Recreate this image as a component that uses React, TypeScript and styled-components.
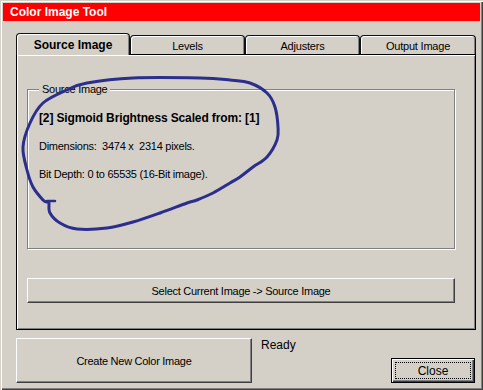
import React from "react";
import styled, { createGlobalStyle } from "styled-components";

const Global = createGlobalStyle`
  html, body { margin: 0; padding: 0; background: #d4d0c8; }
  body { font-family: "Liberation Sans", Arial, sans-serif; font-size: 11px; color: #000; }
`;

const Window = styled.div`
  position: relative;
  width: 483px;
  height: 390px;
  box-sizing: border-box;
  background: #d4d0c8;
  padding: 3px;
  display: flex;
  flex-direction: column;
  box-shadow: inset 1px 1px 0 #d4d0c8, inset 2px 2px 0 #ffffff, inset -1px -1px 0 #404040, inset -2px -2px 0 #808080;
`;

const TitleBar = styled.div`
  height: 18px;
  background: #ff0000;
  color: #fff;
  font-weight: bold;
  font-size: 12px;
  display: flex;
  align-items: center;
  padding-left: 7px;
`;

const Content = styled.div`
  flex: 1;
  display: flex;
  flex-direction: column;
  padding: 12px 4px 0 13px;
`;

const TabRow = styled.div`
  display: flex;
  align-items: flex-end;
  height: 22px;
  margin-bottom: -1px;
  position: relative;
  z-index: 2;
`;

const Tab = styled.div<{ $active?: boolean; $w: number }>`
  box-sizing: border-box;
  width: ${(p) => p.$w}px;
  height: ${(p) => (p.$active ? 22 : 19)}px;
  margin-bottom: ${(p) => (p.$active ? 0 : 1)}px;
  background: #d4d0c8;
  border: 1px solid #111;
  border-bottom: none;
  border-radius: 4px 4px 0 0;
  box-shadow: inset 1px 1px 0 #ffffff, inset -1px 0 0 #808080;
  display: flex;
  align-items: center;
  justify-content: center;
  font-size: ${(p) => (p.$active ? 12 : 11)}px;
  font-weight: ${(p) => (p.$active ? "bold" : "normal")};
  letter-spacing: ${(p) => (p.$active ? 0 : -0.2)}px;
  padding-top: ${(p) => (p.$active ? 0 : 1)}px;
`;

const Panel = styled.div`
  box-sizing: border-box;
  width: 460px;
  height: 276px;
  border: 1px solid #000;
  box-shadow: inset 1px 1px 0 #ffffff, inset -1px -1px 0 #808080;
  padding: 34px 20px 0 10px;
  display: flex;
  flex-direction: column;
`;

const Group = styled.fieldset`
  box-sizing: border-box;
  height: 160px;
  margin: 0;
  padding: 14px 11px 0 11px;
  border: 1px solid #808080;
  box-shadow: 1px 1px 0 #ffffff, inset 1px 1px 0 #ffffff;
  display: flex;
  flex-direction: column;
  position: relative;
`;

const Legend = styled.div`
  position: absolute;
  top: -7px;
  left: 11px;
  padding: 0 3px;
  background: #d4d0c8;
  line-height: 13px;
  letter-spacing: -0.25px;
`;

const InfoLine = styled.div<{ $bold?: boolean }>`
  height: 28px;
  line-height: 28px;
  font-size: ${(p) => (p.$bold ? 12 : 11)}px;
  font-weight: ${(p) => (p.$bold ? "bold" : "normal")};
  letter-spacing: ${(p) => (p.$bold ? -0.13 : -0.27)}px;
  white-space: pre;
`;

const Button = styled.button<{ $h: number; $w?: number }>`
  box-sizing: border-box;
  height: ${(p) => p.$h}px;
  width: ${(p) => (p.$w ? `${p.$w}px` : "100%")};
  background: #d4d0c8;
  border: none;
  border-top: 1px solid #ffffff;
  border-left: 1px solid #ffffff;
  border-right: 1px solid #404040;
  border-bottom: 1px solid #404040;
  box-shadow: inset -1px -1px 0 #808080;
  font-family: "Liberation Sans", Arial, sans-serif;
  font-size: 11px;
  letter-spacing: -0.27px;
  color: #000;
  padding: 0;
  display: flex;
  align-items: center;
  justify-content: center;
`;

const SelectButton = styled(Button)`
  margin-top: 29px;
`;

const DefaultButton = styled.button`
  box-sizing: border-box;
  width: 84px;
  height: 25px;
  background: #d4d0c8;
  border: 1px solid #000;
  box-shadow: inset 1px 1px 0 #ffffff, inset -1px -1px 0 #404040, inset -2px -2px 0 #808080;
  font-family: "Liberation Sans", Arial, sans-serif;
  font-size: 12px;
  color: #000;
  padding: 3px;
  display: flex;
`;

const FocusRect = styled.span`
  flex: 1;
  border: 1px dotted #000;
  display: flex;
  align-items: center;
  justify-content: center;
`;

const BottomRow = styled.div`
  display: flex;
  margin-top: 8px;
`;

const StatusArea = styled.div`
  flex: 1;
  height: 45px;
  display: flex;
  flex-direction: column;
  justify-content: space-between;
  align-items: flex-start;
  padding-left: 9px;
  padding-right: 1px;
`;

const Status = styled.div`
  font-size: 12px;
  line-height: 14px;
`;

const CloseWrap = styled.div`
  align-self: flex-end;
`;

const Annotation = styled.svg`
  position: absolute;
  left: 0;
  top: 0;
  pointer-events: none;
`;

const pts: [number, number][] = [
  [47, 202], [43, 200], [33, 187], [27, 170], [23, 147], [30, 123], [43, 103], [67, 90], [87, 83],
  [133, 78], [200, 78], [230, 80], [250, 83], [267, 93], [275, 107], [278, 127], [277, 140],
  [267, 157], [253, 167], [240, 177], [230, 183], [213, 193], [197, 200], [187, 203], [160, 213],
  [133, 222], [107, 228], [77, 229], [60, 223], [50, 213], [49, 203],
];

function smoothPath(p: [number, number][]) {
  let d = `M ${p[0][0]} ${p[0][1]}`;
  for (let i = 0; i < p.length - 1; i++) {
    const p0 = p[i - 1] || p[i];
    const p1 = p[i];
    const p2 = p[i + 1];
    const p3 = p[i + 2] || p2;
    const c1x = p1[0] + (p2[0] - p0[0]) / 6;
    const c1y = p1[1] + (p2[1] - p0[1]) / 6;
    const c2x = p2[0] - (p3[0] - p1[0]) / 6;
    const c2y = p2[1] - (p3[1] - p1[1]) / 6;
    d += ` C ${c1x.toFixed(1)} ${c1y.toFixed(1)} ${c2x.toFixed(1)} ${c2y.toFixed(1)} ${p2[0]} ${p2[1]}`;
  }
  return d;
}

export default function App() {
  return (
    <>
      <Global />
      <Window>
        <TitleBar>Color Image Tool</TitleBar>
        <Content>
          <TabRow>
            <Tab $active $w={114}>Source Image</Tab>
            <Tab $w={115}>Levels</Tab>
            <Tab $w={115}>Adjusters</Tab>
            <Tab $w={116}>Output Image</Tab>
          </TabRow>
          <Panel>
            <Group>
              <Legend>Source Image</Legend>
              <InfoLine $bold>[2] Sigmoid Brightness Scaled from: [1]</InfoLine>
              <InfoLine>{"Dimensions:  3474 x  2314 pixels."}</InfoLine>
              <InfoLine>Bit Depth: 0 to 65535 (16-Bit image).</InfoLine>
            </Group>
            <SelectButton $h={25}>Select Current Image -&gt; Source Image</SelectButton>
          </Panel>
          <BottomRow>
            <Button $h={45} $w={236}>Create New Color Image</Button>
            <StatusArea>
              <Status>Ready</Status>
              <CloseWrap>
                <DefaultButton>
                  <FocusRect>Close</FocusRect>
                </DefaultButton>
              </CloseWrap>
            </StatusArea>
          </BottomRow>
        </Content>
        <Annotation width="483" height="390" viewBox="0 0 483 390">
          <path d={smoothPath(pts)} fill="none" stroke="#2c2e8e" strokeWidth="3" strokeLinecap="round" strokeLinejoin="round" />
          <path d="M 47 201 L 55 201" fill="none" stroke="#2c2e8e" strokeWidth="2.5" strokeLinecap="round" />
        </Annotation>
      </Window>
    </>
  );
}
